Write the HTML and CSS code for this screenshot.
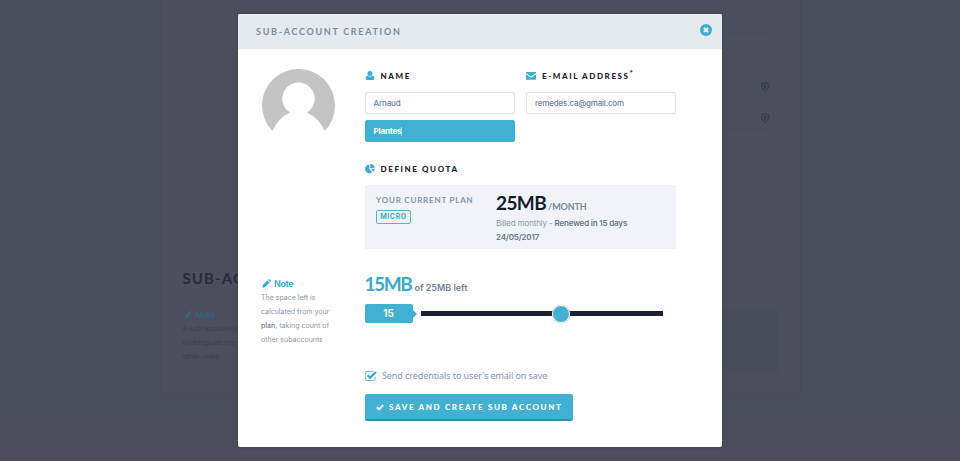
FILE: index.html
```html
<!DOCTYPE html>
<html lang="en">
<head>
<meta charset="utf-8">
<title>Sub-account creation</title>
<link rel="stylesheet" href="styles.css">
</head>
<body>
<svg class="defs" aria-hidden="true">
  <symbol id="pencil" viewBox="0 0 10 10"><path d="M1 6.6 6 1.6 8.4 4 3.4 9 .3 9.7ZM6.7.9 7.4.3Q8 0 8.6.5L9.6 1.5Q10 2 9.6 2.6L9 3.3Z"/></symbol>
  <symbol id="shield" viewBox="0 0 8 10"><path d="M4 .6 7.3 1.8V5Q7 8 4 9.4 1 8 .7 5V1.8Z" fill="none" stroke="currentColor"/><path d="M4 2.7A1.2 1.2 0 0 1 4.6 5L5 6.8H3L3.4 5A1.2 1.2 0 0 1 4 2.7Z"/></symbol>
</svg>

<main class="page">
  <section class="sheet">
    <div class="sheet-fields">
      <div class="ghost-input"></div>
      <div class="ghost-input"><svg class="shield"><use href="#shield"/></svg></div>
      <div class="ghost-input"><svg class="shield"><use href="#shield"/></svg></div>
    </div>
    <h1 class="sheet-title">SUB-AC</h1>
    <div class="sheet-row">
      <aside class="note note-dim">
        <h4 class="note-title"><svg class="pencil"><use href="#pencil"/></svg>Note</h4>
        <p class="note-text">A sub-account is<br>to deleguate cre<br>other users</p>
      </aside>
      <div class="ghost-panel"></div>
    </div>
  </section>
</main>

<div class="modal" role="dialog">
  <header class="modal-header">
    <h2 class="modal-title">SUB-ACCOUNT CREATION</h2>
    <svg class="close" viewBox="0 0 12 12"><circle cx="6" cy="6" r="6" fill="#40b0d2"/><path d="M3.9 3.9 8.1 8.1M8.1 3.9 3.9 8.1" stroke="#eef6fa" stroke-width="2"/></svg>
  </header>
  <div class="modal-body">
    <div class="row identity">
      <svg class="avatar" viewBox="0 0 73 62"><path d="M10.4 62A36.5 36.5 0 1 1 62.6 62Q57 49 45 43.5A16.2 16.2 0 1 0 28 43.5Q16 49 10.4 62Z" fill="#c4c4c4"/></svg>
      <div class="fields">
        <div class="field">
          <div class="label"><svg class="icon" viewBox="0 0 10 10"><circle cx="5" cy="2.6" r="2.5"/><path d="M2.4 4.4Q.7 4.8.6 7.2.5 9 1.8 9H8.2Q9.5 9 9.4 7.2 9.3 4.8 7.6 4.4 5 6.8 2.4 4.4Z"/></svg><span>NAME</span></div>
          <div class="input"><span>Arnaud</span></div>
          <div class="input input-active"><span>Plantes</span><i class="caret"></i></div>
        </div>
        <div class="field">
          <div class="label"><svg class="icon" viewBox="0 0 10 10"><path d="M0 1H10V2L5 5.5 0 2ZM0 3.2 5 6.8 10 3.2V8.8H0Z"/></svg><span>E-MAIL ADDRESS<sup>*</sup></span></div>
          <div class="input"><span>remedes.ca@gmail.com</span></div>
        </div>
      </div>
    </div>

    <div class="quota">
      <div class="label"><svg class="icon" viewBox="0 0 10 10"><path d="M4.4.5V4.9L7.4 8.2A4.4 4.4 0 1 1 4.4.5ZM5.2.1A4.5 4.5 0 0 1 9.7 4.3H5.2ZM6 5.1H9.8Q9.6 6.7 8.5 7.8Z"/></svg><span>DEFINE QUOTA</span></div>
      <div class="plan">
        <div class="plan-left">
          <div class="plan-caption">YOUR CURRENT PLAN</div>
          <span class="badge">MICRO</span>
        </div>
        <div class="plan-right">
          <div class="price"><strong>25MB</strong><span>/MONTH</span></div>
          <p class="billing"><span>Billed monthly - </span><b>Renewed in 15 days<br>24/05/2017</b></p>
        </div>
      </div>
    </div>

    <div class="row allocation">
      <aside class="note">
        <h4 class="note-title"><svg class="pencil"><use href="#pencil"/></svg>Note</h4>
        <p class="note-text">The space left is<br>calculated from your<br><b>plan</b>, taking count of<br>other subaccounts</p>
      </aside>
      <div class="amount-box">
        <div class="amount"><strong>15MB</strong><span>of 25MB left</span></div>
        <div class="slider">
          <div class="value">15</div>
          <div class="track"><div class="knob"></div></div>
        </div>
      </div>
    </div>

    <div class="actions">
      <label class="check"><svg class="checkbox" viewBox="0 0 12 12"><path d="M10.2 7V9.2Q10.2 10.6 8.8 10.6H2Q.6 10.6.6 9.2V2.8Q.6 1.4 2 1.4H8.6" fill="none" stroke="#66bfda"/><path d="M2.6 5.2 5.2 7.8 11 2" fill="none" stroke="#2fa9cf" stroke-width="2.2"/></svg><span>Send credentials to user's email on save</span></label>
      <div class="button"><svg class="tick" viewBox="0 0 8 8"><path d="M.8 4 3.1 6.3 7.2 1.9" fill="none" stroke="#fff" stroke-width="2"/></svg><span>SAVE AND CREATE SUB ACCOUNT</span></div>
    </div>
  </div>
</div>
</body>
</html>
```
FILE: styles.css
```css
* { box-sizing: border-box; }
body { margin: 0; height: 461px; overflow: hidden; background: #4d4e5b; font-family: "Inter", sans-serif; }
h1, h2, h4, p { margin: 0; }
svg { display: block; fill: currentColor; flex: none; }
.defs { position: absolute; width: 0; height: 0; }

.page { height: 416px; background: #4a4e5a; }
.sheet { width: 641px; height: 394px; margin: 0 auto; padding: 11px 22px 0; background: #4d4e5b; border: 1px solid #484b57; border-top: 0; }
.sheet-fields { display: flex; flex-direction: column; align-items: flex-end; height: 257px; padding-right: 4px; }
.ghost-input { width: 290px; height: 22px; border: 1px solid #494b57; display: flex; align-items: center; justify-content: flex-end; padding-right: 4px; margin-bottom: 9px; }
.ghost-input:first-child { margin-bottom: 43px; }
.shield { width: 8px; height: 10px; color: #353846; }
.sheet-title { height: 39px; white-space: nowrap; font: 700 15px/20px Lato, sans-serif; letter-spacing: 1.1px; color: #272a3c; }
.sheet-row { display: flex; justify-content: space-between; }
.ghost-panel { width: 440px; height: 65px; margin-top: 2px; background: #494d59; }

.modal { position: absolute; left: 238px; top: 14px; width: 484px; height: 433px; background: #fff; border-radius: 2px; overflow: hidden; box-shadow: 0 0 3px #3c3e4a; }
.modal-header { height: 35px; padding: 0 10px 0 18px; display: flex; align-items: center; justify-content: space-between; background: #e5eaee; }
.modal-title { font: 700 9px/12px Lato, sans-serif; letter-spacing: 1.7px; color: #7d8b9b; }
.close { width: 12px; height: 12px; margin-bottom: 3px; }
.modal-body { padding: 20px 46px 0 23px; }
.row { display: grid; grid-template-columns: 103.5px 311.5px; }
.identity { height: 91px; }
.avatar { width: 73px; height: 62px; margin-left: 1px; }
.fields { display: grid; grid-template-columns: 150px 150px; column-gap: 11.5px; }
.label { display: flex; align-items: center; height: 13px; gap: 6px; color: #1c2130; font: 900 8px/13px Lato, sans-serif; letter-spacing: 1.6px; white-space: nowrap; }
.label span { padding-top: 1px; }
.label .icon { width: 10px; height: 10px; color: #3baed1; }
.label sup { font-size: 8px; line-height: 0; letter-spacing: 0; vertical-align: 3px; }
.input { height: 22px; margin-top: 6px; padding: 0 8px; display: flex; align-items: center; border: 1px solid #dfe4e9; border-radius: 2px; font-size: 8px; font-weight: 500; line-height: 12px; letter-spacing: -.18px; color: #728091; }
.label + .input { margin-top: 10px; }
.input-active { background: #41b0d2; border-color: #41b0d2; color: #fff; font-weight: 700; }
.caret { width: 1px; height: 9px; background: #a5dbea; }

.quota { margin-left: 103.5px; height: 107px; padding-top: 2px; }
.plan { margin-top: 10px; height: 64px; display: grid; grid-template-columns: 131.5px 1fr; background: #f0f4f8; }
.plan-left { padding: 9px 0 0 11.5px; }
.plan-caption { font: 700 8px/12px Lato, sans-serif; letter-spacing: .8px; color: #8793a2; white-space: nowrap; }
.badge { display: flex; align-items: center; justify-content: center; width: 35px; height: 14px; margin-top: 4px; border: 1px solid #53b7d5; border-radius: 2px; font: 700 7px/10px Inter, sans-serif; letter-spacing: .6px; color: #3baed1; }
.price { display: flex; align-items: baseline; padding-top: 6px; height: 31px; font-family: Lato, sans-serif; color: #171b2c; }
.price strong { font-size: 19px; line-height: 24px; letter-spacing: -.6px; }
.price span { margin-left: 2px; font-size: 9px; font-weight: 700; letter-spacing: -.15px; color: #7a8797; }
.billing { font-size: 8px; line-height: 14px; letter-spacing: -.17px; color: #8d98a6; white-space: nowrap; }
.billing b { font-weight: 600; color: #697789; }

.allocation { padding-top: 5px; height: 98px; }
.note-title { display: flex; align-items: center; gap: 3px; height: 14px; padding: 1px 0 0 1px; margin-bottom: 1px; font-size: 9px; font-weight: 600; line-height: 14px; letter-spacing: -.4px; color: #2eabd0; }
.pencil { width: 9px; height: 9px; }
.note { padding-top: 4px; }
.note-text { font-size: 7px; line-height: 14px; color: #8c97a5; white-space: nowrap; }
.note-text b { font-weight: 500; color: #66819a; }
.note-dim { width: 56px; padding-top: 0; }
.note-dim .note-title { color: #2d667d; }
.note-dim .note-text { color: #3d404e; letter-spacing: -.05px; }
.amount { display: flex; align-items: baseline; height: 31px; margin-top: 1px; color: #35acd0; }
.amount strong { font: 700 19px/22px Lato, sans-serif; letter-spacing: -1.4px; }
.amount span { margin-left: 3px; font: 600 9px/12px Inter, sans-serif; color: #768495; }
.slider { display: flex; align-items: center; height: 19px; }
.value { position: relative; width: 48px; height: 19px; border-radius: 2px; background: #41b0d2; color: #fff; font-size: 10px; font-weight: 700; line-height: 19px; text-align: center; }
.value::after { content: ""; position: absolute; left: 47px; top: 5px; border: 5px solid transparent; border-left-color: #41b0d2; border-right: 0; }
.track { width: 242px; height: 5px; margin-left: 8.5px; background: #1b2032; display: flex; align-items: center; }
.knob { width: 18px; height: 18px; margin-left: 131px; border: 1px solid #fff; border-radius: 50%; background: #41b0d2; box-shadow: 0 0 1px #6d7780; flex: none; }

.actions { margin-left: 103.5px; padding-top: 4px; }
.check { display: flex; align-items: center; gap: 5.5px; height: 14px; font: 9px/14px "Noto Sans", sans-serif; letter-spacing: -.08px; color: #8995a4; white-space: nowrap; }
.checkbox { width: 12px; height: 12px; }
.button { display: flex; align-items: center; width: 208.5px; height: 27px; margin-top: 11px; padding: 0 11px; gap: 5.5px; border-radius: 2px; border-bottom: 2px solid #2c91b1; background: #41b0d2; color: #fff; font: 900 8px/12px Lato, sans-serif; letter-spacing: 1.65px; white-space: nowrap; }
.tick { width: 8px; height: 8px; }
```
